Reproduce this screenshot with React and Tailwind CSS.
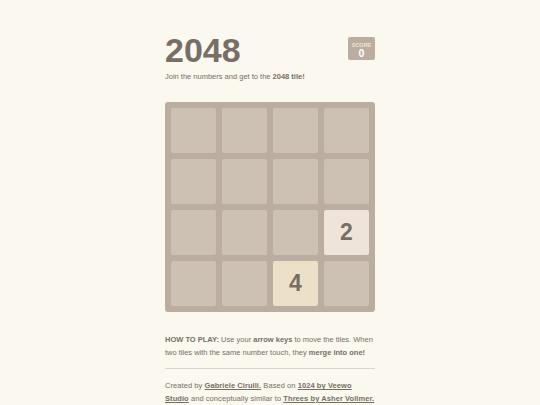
import React from "react";

const board = [
  [0, 0, 0, 0],
  [0, 0, 0, 0],
  [0, 0, 0, 2],
  [0, 0, 4, 0],
];

const tileClass = {
  0: "bg-[#cdc1b4]",
  2: "bg-[#eee4da] text-[#776e65]",
  4: "bg-[#ede0c8] text-[#776e65]",
};

function Tile({ value }) {
  return (
    <div
      className={`w-[45px] h-[45px] rounded-[2px] flex items-center justify-center font-bold text-[23px] leading-none ${tileClass[value]}`}
    >
      {value ? value : null}
    </div>
  );
}

export default function App() {
  return (
    <div className="min-h-screen bg-[#faf8ef] text-[#776e65] font-['Liberation_Sans',Arial,sans-serif]">
      <div className="w-[210px] mx-auto pt-[33px]">
        <div className="flex justify-between items-start">
          <h1 className="text-[34px] font-bold leading-[34px]">2048</h1>
          <div className="mt-[4px] w-[27px] h-[23px] bg-[#bbada0] rounded-[2px] flex flex-col items-center pt-[4.5px] font-bold">
            <span className="text-[5.5px] leading-[7px] text-[#eee4da] uppercase">Score</span>
            <span className="text-[10.5px] leading-[9px] text-white">0</span>
          </div>
        </div>
        <p className="mt-[4px] text-[7.5px] leading-[12px]">
          Join the numbers and get to the <strong>2048 tile!</strong>
        </p>

        <div className="mt-[19px] w-[210px] h-[210px] bg-[#bbada0] rounded-[3px] p-[6px] grid grid-cols-4 gap-[6px]">
          {board.flat().map((v, i) => (
            <Tile key={i} value={v} />
          ))}
        </div>

        <p className="mt-[22px] text-[7.5px] leading-[12.6px]">
          <strong>HOW TO PLAY:</strong> Use your <strong>arrow keys</strong> to move the tiles. When two tiles with the same number touch, they <strong>merge into one!</strong>
        </p>
        <hr className="mt-[9px] mb-[11px] border-0 border-t border-[#d8d4d0]" />
        <p className="text-[7.5px] leading-[12.6px] tracking-[0.07px]">
          Created by <a className="font-bold underline">Gabriele Cirulli.</a> Based on <a className="font-bold underline">1024 by Veewo Studio</a> and conceptually similar to <a className="font-bold underline">Threes by Asher Vollmer.</a>
        </p>
      </div>
    </div>
  );
}
